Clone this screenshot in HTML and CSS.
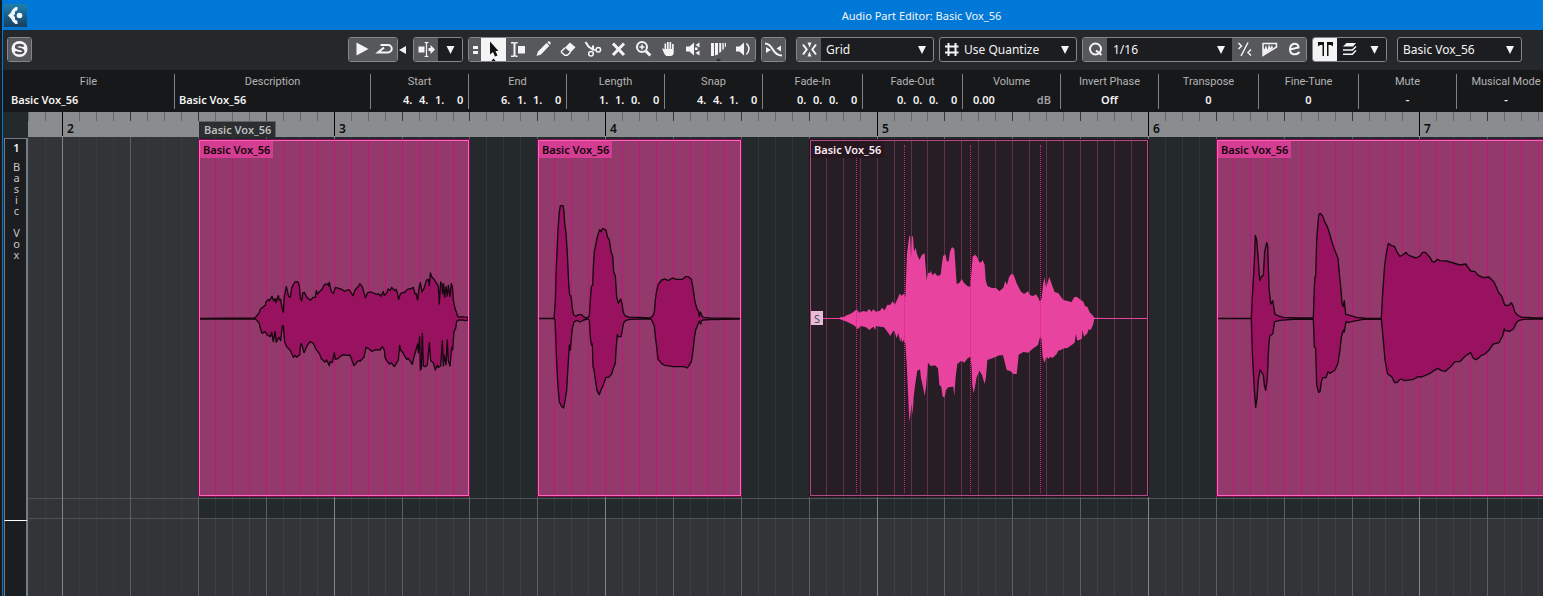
FILE: index.html
```html
<!DOCTYPE html>
<html lang="en">
<head>
<meta charset="utf-8">
<meta name="viewport" content="width=device-width, initial-scale=1">
<title>Audio Part Editor: Basic Vox_56</title>
<link rel="stylesheet" href="styles.css">
</head>
<body>
<div class="window">
  <header class="titlebar">
    <svg class="app-logo" viewBox="0 0 23 23" aria-hidden="true">
      <defs><linearGradient id="logo-bg" x1="0" y1="0" x2="0" y2="1"><stop offset="0" stop-color="#1f7fae"/><stop offset="1" stop-color="#163f60"/></linearGradient></defs>
      <rect width="23" height="23" fill="url(#logo-bg)"/>
      <path d="M11.500 3h2v3L11 7.500V10l-1.500 1.500L11 13v2.500l2.500 1.500v3h-2l-3-2.500L7 14.500l-3-3 3-3L8.500 5.500z" fill="#f4f7f9"/>
      <circle cx="15.500" cy="11.500" r="2.800" fill="#f4f7f9"/>
    </svg>
    <h1 class="title">Audio Part Editor: Basic Vox_56</h1>
  </header>

  <div class="toolbar" role="toolbar" aria-label="Editor tools">
    <div class="group">
      <button class="tool" aria-label="Solo editor"><svg class="icon" viewBox="0 0 25 25"><circle cx="12.500" cy="12" r="8" fill="#f6f6f6"/><path d="M16.300 9.600C15.500 7.500 9 7.300 9 10c0 2.500 7.300 1.300 7.300 4.200 0 2.800-7 2.500-7.700.2" fill="none" stroke="#515356" stroke-width="2.300"/></svg></button>
    </div>

    <div class="group group-transport">
      <button class="tool" aria-label="Play"><svg class="icon" viewBox="0 0 25 25"><path d="M7.500 5.500v13L19.500 12z"/></svg></button>
      <button class="tool" aria-label="Loop"><svg class="icon" viewBox="0 0 25 25"><path class="line" d="M7.500 8h7.500a3.700 3.700 0 0 1 0 7.500H5l6-5"/></svg></button>
    </div>
    <button class="expander" aria-label="Collapse transport"><svg class="icon-small" viewBox="0 0 7 8"><path d="M7 0v8L0 4z"/></svg></button>

    <div class="group">
      <button class="tool" aria-label="Auto-scroll"><svg class="icon" viewBox="0 0 25 25"><path d="M4.500 9.500h6v6h-6zM10 5h5l-1.900 1.500v12L15 20h-5l1.900-1.500v-12zM14.500 11h2V8l4.500 4.500-4.500 4.500v-3h-2z"/></svg></button>
      <button class="tool dark" aria-label="Auto-scroll settings"><svg class="icon" viewBox="0 0 25 25"><path d="M8.500 9h8l-4 8z"/></svg></button>
    </div>

    <div class="group">
      <button class="tool narrow" aria-label="Tool options"><svg class="icon-narrow" viewBox="0 0 13 25"><path d="M4 9h5v3H4zM4 14h5v3H4z"/></svg></button>
      <button class="tool active" aria-label="Object selection" aria-pressed="true"><svg class="icon" viewBox="0 0 25 25"><path fill="#111" d="M9 4.500v13l3-2.500 2 4.500 2.500-1-2-4.500h3zM9.500 25l3-3.500 3 3.500z"/></svg></button>
      <button class="tool" aria-label="Range selection"><svg class="icon" viewBox="0 0 25 25"><path d="M5 5h3l.8.800L9.600 5h2v1.500H9.500v12h2.100V20h-2l-.8-.8L8 20H5v-1.500h2.500v-12H5zM12 9h7v7.500h-7z"/></svg></button>
      <button class="tool" aria-label="Draw"><svg class="icon" viewBox="0 0 25 25"><path d="M5.500 19l1.500-4.500L15.500 6l2.800 2.700L10 17.500zM16.300 5.200l1-.9c1-.6 3 1.500 2.400 2.500l-.9.900z"/></svg></button>
      <button class="tool" aria-label="Erase"><svg class="icon" viewBox="0 0 25 25"><path d="M14 5.500l5.500 4.800-5 5.200L9 10.500z"/><path class="thin" d="M9 10.700L5.500 14.200v1.300l3.300 2.800h2.500l3.200-3"/></svg></button>
      <button class="tool" aria-label="Split"><svg class="icon" viewBox="0 0 25 25"><path class="line" d="M4.500 5l3 4.500 5 3.500M12 8.500v5"/><path class="thin" d="M12.500 13h3"/><circle class="thin" cx="10" cy="16.800" r="2.300"/><circle class="thin" cx="17.300" cy="12.800" r="2.300"/></svg></button>
      <button class="tool" aria-label="Mute"><svg class="icon" viewBox="0 0 25 25"><path class="heavy" d="M7 6.500l11 11.500M18 6.500L7 18"/></svg></button>
      <button class="tool" aria-label="Zoom"><svg class="icon" viewBox="0 0 25 25"><circle class="line" cx="11" cy="10" r="5"/><path class="thin" d="M8.500 10h5M11 7.500v5"/><path class="heavy" d="M14.800 14l4.500 4.500"/></svg></button>
      <button class="tool" aria-label="Hand"><svg class="icon" viewBox="0 0 25 25"><path d="M6.500 11l2 1.500V6.500h1.700V12h.8V5h1.700v7h.8V5h1.700v7h.8V7h1.700v8.500c0 2-1.200 3.500-3 3.500h-3.200c-2 0-3-1.500-5-6.500z"/></svg></button>
      <button class="tool" aria-label="Play tool"><svg class="icon" viewBox="0 0 25 25"><path d="M5 9.500h3.500l4.500-4v13l-4.500-4H5zM14.500 8l4-2.500v5zM14.500 16l4-2.500v5zM14 10.500h2.500v2.500H14z"/></svg></button>
      <button class="tool" aria-label="Time warp"><svg class="icon" viewBox="0 0 25 25"><path d="M5 6h3v13H5zM9 6h3v11.500l-3 1zM13.200 6h2v8.800l-2 1.200zM16.300 6h1.500v6l-1.500 1.200zM18.800 6h1.200v3.500l-1.200 1z"/><path fill="#202327" d="M9 25l3.500-3.500L16 25z"/></svg></button>
      <button class="tool" aria-label="Scrub"><svg class="icon" viewBox="0 0 25 25"><path d="M5 9.500h3.500l4.500-4v13l-4.500-4H5z"/><path class="thin" d="M15.300 6.500c3.500 2.500 3.500 8 0 11"/></svg></button>
    </div>

    <div class="group">
      <button class="tool" aria-label="Auto-crossfade"><svg class="icon" viewBox="0 0 25 25"><path class="line" d="M4 6.500c3.500 0 5.500 2 7.500 5.500s4.500 6.500 9.500 6.500"/><path d="M5 10l5 3-5 3zM20 8.500v6l-4.500-3z"/></svg></button>
    </div>

    <div class="group group-snap">
      <button class="tool" aria-label="Snap on/off"><svg class="icon" viewBox="0 0 25 25"><path class="line" d="M6 7.500l3.700 5L6 17.500M19 7.500l-3.700 5 3.700 5"/><path d="M12.500 10.500l-2-5h4zM12.500 14.500l-2 5h4z"/></svg></button>
      <div class="picker"><select class="select select-snap" aria-label="Snap type"><option>Grid</option><option>Events</option></select></div>
    </div>

    <div class="group group-gridtype">
      <svg class="hash" viewBox="0 0 25 25" aria-hidden="true"><path class="line" d="M9.500 6v13M16.500 6v13M6 9.500h13.500M6 15.500h13.500"/></svg>
      <div class="picker"><select class="select select-grid" aria-label="Grid type"><option>Use Quantize</option><option>Bar</option></select></div>
    </div>

    <div class="group">
      <button class="tool" aria-label="Apply quantize"><svg class="icon" viewBox="0 0 25 25"><circle class="line" cx="12.500" cy="12" r="5.500"/><path class="line" d="M13 13.500l5.500 4.500"/></svg></button>
      <div class="picker"><select class="select select-quantize" aria-label="Quantize preset"><option>1/16</option><option>1/8</option></select></div>
      <button class="tool" aria-label="Soft quantize"><svg class="icon" viewBox="0 0 25 25"><path class="thin" d="M16 5.500L9 19M6.500 6l3 3-3 3M19 12.500l-3 3 3 3"/></svg></button>
      <button class="tool" aria-label="Quantize audio"><svg class="icon" viewBox="0 0 25 25"><path class="thin" d="M6 6.500v12L19.500 10V6.500z"/><path d="M6 14V9.500l1.500 3L9 8l1.500 5L12 7l1.500 4L15 8l1 3-9.500 7z"/></svg></button>
      <button class="tool" aria-label="Open quantize panel"><svg class="icon" viewBox="0 0 25 25"><path class="line" d="M8 12.500l8.500-2c0-5.500-8-5-8.500 1.500-.3 6.500 6.500 6.500 9.500 3"/></svg></button>
    </div>

    <div class="group">
      <button class="tool active" aria-label="Show part borders" aria-pressed="true"><svg class="icon" viewBox="0 0 25 25"><path fill="#111" d="M5 5h6v14H9.500V8H7L5 9.500zM14 5h6v4.500L18 8h-2.500v11H14z"/></svg></button>
      <button class="tool dark" aria-label="Lanes"><svg class="icon" viewBox="0 0 25 25"><path d="M9.500 6H19l-3 3.500H6z"/><path class="thin" d="M15.500 13l3.500-3.500M15.500 17l3.500-3.500"/><path d="M6 12.300h10v1.500H6zM6 16.500h10V18H6z"/></svg></button>
      <button class="tool dark" aria-label="Part settings"><svg class="icon" viewBox="0 0 25 25"><path d="M8.500 9h8l-4 8z"/></svg></button>
    </div>

    <div class="group group-part">
      <div class="picker"><select class="select select-part" aria-label="Active part"><option>Basic Vox_56</option></select></div>
    </div>
  </div>

  <dl class="info">
    <div class="cell cell-file"><dt>File</dt><dd>Basic Vox_56</dd></div>
    <div class="cell cell-desc"><dt>Description</dt><dd>Basic Vox_56</dd></div>
    <div class="cell"><dt>Start</dt><dd class="time"><span>4.</span><span>4.</span><span>1.</span><span>0</span></dd></div>
    <div class="cell"><dt>End</dt><dd class="time"><span>6.</span><span>1.</span><span>1.</span><span>0</span></dd></div>
    <div class="cell"><dt>Length</dt><dd class="time"><span>1.</span><span>1.</span><span>0.</span><span>0</span></dd></div>
    <div class="cell"><dt>Snap</dt><dd class="time"><span>4.</span><span>4.</span><span>1.</span><span>0</span></dd></div>
    <div class="cell cell-wide"><dt>Fade-In</dt><dd class="time"><span>0.</span><span>0.</span><span>0.</span><span>0</span></dd></div>
    <div class="cell cell-wide"><dt>Fade-Out</dt><dd class="time"><span>0.</span><span>0.</span><span>0.</span><span>0</span></dd></div>
    <div class="cell"><dt>Volume</dt><dd class="volume"><span>0.00</span><span class="unit">dB</span></dd></div>
    <div class="cell"><dt>Invert Phase</dt><dd class="center">Off</dd></div>
    <div class="cell cell-wide"><dt>Transpose</dt><dd class="center">0</dd></div>
    <div class="cell cell-wide"><dt>Fine-Tune</dt><dd class="center">0</dd></div>
    <div class="cell"><dt>Mute</dt><dd class="center">-</dd></div>
    <div class="cell"><dt>Musical Mode</dt><dd class="center">-</dd></div>
  </dl>

  <main class="editor">
    <aside class="lanes">
      <div class="lanes-head"></div>
      <div class="lane">
        <b class="lane-number">1</b>
        <div class="lane-name" aria-label="Basic Vox"><span>B</span><span>a</span><span>s</span><span>i</span><span>c</span><span>&nbsp;</span><span>V</span><span>o</span><span>x</span></div>
      </div>
      <div class="lane-rest"></div>
    </aside>

    <section class="timeline">
      <div class="ruler">
        <svg class="ticks" data-kind="ruler" aria-hidden="true"></svg>
        <span class="bar-number" style="left:39px">2</span>
        <span class="bar-number" style="left:311px">3</span>
        <span class="bar-number" style="left:582px">4</span>
        <span class="bar-number" style="left:854px">5</span>
        <span class="bar-number" style="left:1125px">6</span>
        <span class="bar-number" style="left:1396px">7</span>
        <span class="part-tag" style="left:171px">Basic Vox_56</span>
      </div>
      <div class="arrange">
        <div class="part-area" style="left:170px"></div>
        <div class="lane-bottom"></div>
        <svg class="ticks" data-kind="grid" data-part-start="170" aria-hidden="true"></svg>

        <article class="clip" style="left:171px;width:270px" data-start="171">
          <svg class="ticks" data-kind="clip" aria-hidden="true"></svg>
          <svg class="wave" viewBox="30 63 804 1062" preserveAspectRatio="none" aria-hidden="true"><path d="M30 595L195 594 200 588 208 578 211 568 218 562 226 556 228 545 236 538 238 543 246 529 251 543 256 536 258 548 265 527 268 541 272 538 276 562 280 576 283 530 289 500 296 530 301 532 305 505 310 493 316 485 324 486 328 498 331 535 335 543 338 520 343 517 350 531 361 541 370 532 376 532 379 512 382 522 390 514 396 508 403 494 414 492 416 498 418 487 424 514 430 521 436 502 446 505 455 508 463 514 477 509 489 527 495 510 506 498 509 491 517 500 526 533 533 518 543 516 560 523 567 522 572 529 577 521 580 514 583 527 591 518 594 507 601 511 605 502 614 512 618 508 622 518 626 538 632 520 645 516 652 508 665 505 670 502 675 522 678 520 683 540 687 505 691 488 696 516 702 505 709 481 715 478 718 497 721 459 726 472 732 478 740 490 745 498 748 552 752 486 756 492 758 522 761 492 764 532 768 500 772 528 775 496 780 530 784 490 787 500 790 540 795 565 803 588 808 592 815 590 834 592V600L826 602 818 600 806 600 800 604 797 625 792 635 788 690 785 682 780 738 775 722 772 660 768 735 763 706 760 738 757 662 752 738 745 742 742 735 736 750 730 728 722 722 718 668 712 735 706 740 700 738 697 640 694 746 691 750 689 650 685 698 683 672 678 690 670 718 667 733 655 715 650 718 640 700 632 690 629 676 625 720 620 728 613 740 603 728 598 732 590 722 585 712 583 690 577 680 570 690 558 689 545 694 537 687 528 682 522 712 510 724 505 722 492 737 480 705 470 706 463 704 452 708 445 715 436 718 433 698 427 728 420 725 418 737 410 720 405 726 394 716 388 700 378 688 370 670 360 665 352 676 342 698 335 672 332 672 329 704 320 712 316 706 310 712 300 690 290 680 284 665 280 617 277 618 272 662 267 652 262 660 259 667 255 635 250 665 245 637 241 650 232 645 225 635 216 640 210 622 208 610 200 600 195 597H30z"/></svg>
          <span class="clip-name">Basic Vox_56</span>
        </article>

        <article class="clip" style="left:510px;width:203px" data-start="510">
          <svg class="ticks" data-kind="clip" aria-hidden="true"></svg>
          <svg class="wave" viewBox="27 63 603 1062" preserveAspectRatio="none" aria-hidden="true"><path d="M27 595H72L76 545 79 440 84 330 88 275 91 257H99L102 275 104 310 108 340 112 400 116 490 119 525 123 528 127 565 131 585 139 589 145 584H155L161 590 167 594 174 592 178 588 181 540 184 500 188 495 190 440 193 395 200 360 205 340 209 329 213 335 218 325 228 330 232 350 238 360 243 395 248 408 251 455 256 468 260 530 265 550 272 537 276 550 280 578 286 588 300 592 330 592 362 594 370 585 373 575 376 540 380 512 385 493 395 480 405 477 415 482 427 474 440 478 458 478 466 470 475 470 484 478 489 505 495 545 501 567 505 572 508 590 511 576 515 586 520 592 540 594 630 595V597L540 599 520 600 515 601 512 612 508 603 503 615 497 630 493 655 489 692 484 725 472 744 462 740 430 740 405 736 395 731 388 722 384 718 380 680 376 650 373 618 365 600 362 597 330 597 300 598 288 601 281 608 277 630 273 650 265 650 262 644 258 690 256 730 250 745 245 762 236 772 228 772 222 788 218 800 212 812 208 824 201 812 197 785 192 750 189 740 187 672 184 675 181 650 178 600 172 597 161 600 150 606 140 601 132 606 127 625 124 655 121 690 118 675 114 740 110 810 107 830 101 864 94 858 88 845 84 800 80 730 78 670 75 600 72 596H27z"/></svg>
          <span class="clip-name">Basic Vox_56</span>
        </article>

        <article class="clip selected" style="left:782px;width:338px" data-start="782">
          <svg class="ticks" data-kind="clip" aria-hidden="true"></svg>
          <svg class="wave" viewBox="33 33 1008 1062" preserveAspectRatio="none" aria-hidden="true"><path d="M33 564H120L122 560 130 562 140 556 150 552 160 546 170 538 178 548 190 543 200 545 207 537 215 545 220 538 228 545 240 542 246 533 254 541 262 524 270 525 278 514 284 524 292 508 299 491 305 497 310 491 316 500 321 370 328 318 331 318 333 385 336 318 339 320 342 365 347 353 351 372 358 390 366 374 374 370 376 400 380 450 384 428 390 430 392 422 398 436 405 428 412 438 422 434 426 400 429 378 436 373 441 395 446 393 450 365 456 351 463 356 466 400 470 462 478 459 485 447 492 459 503 469 511 470 514 430 518 380 525 374 531 380 537 395 542 398 548 390 554 405 557 450 562 468 575 474 588 474 598 484 610 473 616 453 621 465 627 442 634 431 641 435 650 460 662 484 672 492 684 484 690 496 700 498 708 493 715 503 720 515 725 505 729 465 733 442 738 472 748 441 756 465 764 486 775 490 790 510 815 516 822 502 830 500 843 510 850 515 855 528 862 530 870 548 877 555 883 563 920 564H1041V567H883L879 585 872 600 866 598 862 610 852 620 847 600 846 626 832 632 828 612 824 638 815 645 802 654 792 655 782 660 775 662 770 672 757 685 753 680 745 686 740 680 733 698 728 680 724 625 720 622 714 645 700 655 685 668 670 666 656 674 653 705 650 732 640 732 632 724 620 720 615 700 609 676 598 676 585 682 562 690 558 740 554 762 546 735 538 722 530 742 524 775 521 790 517 765 514 700 511 680 503 685 493 698 484 692 472 702 467 740 463 798 460 770 445 772 438 780 434 802 428 800 424 770 418 765 414 715 405 706 392 708 384 698 378 770 374 798 369 770 363 745 360 718 352 722 346 760 341 800 338 855 335 820 331 855 328 876 324 790 320 700 316 640 310 630 306 638 304 622 301 636 295 610 290 625 283 602 278 605 271 618 262 605 252 592 240 590 228 588 226 600 220 590 208 600 198 592 182 588 173 598 165 588 150 580 135 573 120 568V567H33z"/></svg>
          <i class="hitpoint" style="left:45px"></i><i class="hitpoint" style="left:93px"></i><i class="hitpoint" style="left:159px"></i><i class="hitpoint" style="left:229px"></i>
          <span class="clip-name">Basic Vox_56</span>
          <span class="snap-flag">S</span>
        </article>

        <article class="clip" style="left:1189px;width:400px" data-start="1189">
          <svg class="ticks" data-kind="clip" aria-hidden="true"></svg>
          <svg class="wave" viewBox="54 33 1194 1062" preserveAspectRatio="none" aria-hidden="true"><path d="M54 565H154L157 500 161 430 164 375 166 316 170 330 175 390 179 452 184 440 190 436 194 365 200 338 203 345 206 440 207 475 212 522 218 512 222 535 225 553 236 558 250 562 290 564H340L343 470 345 440 347 440 350 330 356 255 361 250 368 258 374 275 382 290 390 315 397 340 405 362 414 385 418 430 423 480 426 520 430 530 433 512 437 553 450 556 470 562 500 565H544L548 490 554 405 560 365 565 340 573 346 584 350 592 368 600 379 608 375 618 367 626 376 648 384 660 378 668 367 676 367 690 382 696 394 704 396 712 388 720 392 740 393 760 399 780 405 797 402 812 423 825 425 835 436 850 443 867 441 882 456 897 490 905 498 914 525 925 527 934 518 940 530 944 545 952 555 965 562 985 562 1000 564 1248 564V567L1000 567 970 568 958 571 950 577 940 597 928 604 915 602 913 596 908 618 897 638 880 642 867 660 855 672 845 676 829 689 820 685 812 668 796 678 780 695 765 695 750 712 736 724 725 722 712 715 690 730 665 741 655 740 640 748 615 752 602 747 590 758 584 758 575 740 563 732 555 690 549 620 544 568 500 567 485 569 455 575 445 578 438 575 433 606 430 600 424 622 420 660 414 700 405 720 390 730 384 725 378 743 368 743 364 755 360 785 356 787 350 765 347 655 343 650 340 568 290 567 240 571 224 575 218 612 209 618 206 650 202 745 197 781 193 765 190 735 180 720 175 750 171 805 167 832 163 780 158 690 155 600 154 566H54z"/></svg>
          <span class="clip-name">Basic Vox_56</span>
        </article>
      </div>
    </section>
  </main>
</div>
<script src="grid.js"></script>
</body>
</html>
```
FILE: styles.css
```css
* { box-sizing: border-box; }

body {
  margin: 0;
  background: #24292b;
  color: #f4f4f4;
  font-family: "Noto Sans", "Open Sans", sans-serif;
  font-size: 11px;
}

button, select { font: inherit; color: inherit; margin: 0; padding: 0; border: 0; background: none; }

.window {
  display: flex;
  flex-direction: column;
  min-height: 100vh;
  overflow: hidden;
  padding-left: 3px;
  background: linear-gradient(to right, #17191b 2px, #0078d7 2px, #0078d7 3px, #24292b 3px);
}

/* Title bar */
.titlebar {
  display: grid;
  grid-template-columns: 24px 1fr 24px;
  align-items: center;
  height: 30px;
  margin-left: -1px;
  padding-left: 2px;
  background: #0078d7;
}
.app-logo { width: 23px; height: 23px; }
.title { margin: 0; padding-left: 296px; font-size: 11px; font-weight: 400; text-align: center; }

/* Toolbar */
.toolbar {
  display: flex;
  align-items: center;
  gap: 5px;
  height: 40px;
  padding: 0 21px 1px 4px;
  background: #24282b;
}
.group {
  display: flex;
  flex: none;
  height: 25px;
  border: 1px solid #85878a;
  border-radius: 3px;
  overflow: hidden;
  background: #1b1d20;
}
.group-transport { margin-left: auto; }
.group-snap, .group-part { margin-left: 5px; }
.tool { display: flex; flex: none; width: 25px; height: 23px; align-items: center; justify-content: center; background: #56585b; }
.tool:first-child, .tool:last-child { width: 24px; }
.tool:only-child { width: 23px; }
.tool.narrow { width: 12px; }
.tool.dark { background: #1b1d20; }
.tool.active { background: #f4f4f4; }
.icon, .hash { flex: none; width: 25px; height: 25px; fill: #f4f4f4; }
.icon-narrow { flex: none; width: 13px; height: 25px; fill: #f4f4f4; }
.icon-small { width: 7px; height: 8px; fill: #f4f4f4; }
.line, .thin, .heavy { fill: none; stroke: #f4f4f4; stroke-width: 2; }
.thin { stroke-width: 1.5; }
.heavy { stroke-width: 3; }
.expander { display: flex; align-items: center; height: 25px; margin: 0 2px 0 -4px; }

.hash { margin: -1px; }
.picker { position: relative; display: flex; }
.picker::after {
  content: "";
  position: absolute;
  top: 8px;
  right: 7px;
  width: 8px;
  height: 8px;
  background: #f4f4f4;
  clip-path: polygon(0 0, 100% 0, 50% 100%);
  pointer-events: none;
}
.select { height: 23px; padding-left: 5px; appearance: none; font-size: 12px; outline: none; }
.select option { background: #1b1d20; }
.select-snap { width: 112px; }
.select-grid { width: 113px; padding-left: 1px; }
.select-quantize { width: 125px; padding-left: 6px; }
.select-part { width: 123px; }

/* Info line */
.info {
  display: flex;
  height: 42px;
  margin: 0;
  padding: 4px 0 3px;
  overflow: hidden;
  background: #17181a;
}
.cell { flex: none; width: 98px; border-right: 1px solid #808285; }
.cell-wide { width: 100px; }
.cell-file { width: 172px; }
.cell-desc { width: 196px; }
.cell:last-child { border-right: 0; }
.cell dt { height: 15px; color: #b4b4b4; font-family: Roboto, "Noto Sans", sans-serif; line-height: 15px; text-align: center; }
.cell dd { height: 16px; margin: 3px 0 0 4px; font-weight: 600; line-height: 15px; }
.cell-file dd { margin-left: 8px; }
.cell .center { margin-left: 0; text-align: center; }
.cell .time { display: grid; grid-template-columns: 16px 16px 22px 6px; justify-content: end; margin-right: 5px; }
.cell .volume { display: flex; justify-content: space-between; margin: 3px 9px 0 10px; }
.unit { color: #a0a2a4; }

/* Lane list */
.editor { display: flex; flex: 1; }
.lanes { display: flex; flex: none; flex-direction: column; width: 25px; padding-left: 1px; }
.lanes-head { height: 26px; }
.lane {
  height: 383px;
  padding: 1px 0 0 2px;
  border: solid #6e7c88;
  border-width: 1px 2px 0 1px;
  border-bottom: 1px solid #fff;
  background: #1b1d21;
  text-align: center;
}
.lane-rest { flex: 1; border: solid #6e7c88; border-width: 0 2px 0 1px; background: #1b1d21; }
.lane-number { display: block; height: 21px; line-height: 16px; font-weight: 600; }
.lane-name { display: flex; flex-direction: column; color: #c8c8c8; line-height: 11px; }

/* Timeline */
.timeline { display: flex; flex: 1; flex-direction: column; min-width: 0; overflow: hidden; }
.ruler { position: relative; height: 25px; background: #8b8c90; }
.ticks { position: absolute; top: 0; left: 0; width: 100%; height: 100%; }
.bar-number { position: absolute; bottom: 1px; color: #0c0c0c; font-size: 12px; font-weight: 600; line-height: 15px; }
.part-tag {
  position: absolute;
  bottom: 0;
  padding: 0 4px 0 5px;
  border: solid #606366;
  border-width: 1px 1px 0 0;
  background: #2c2f31;
  color: #bdbdbd;
  font-weight: 600;
  line-height: 15px;
}
.arrange { position: relative; flex: 1; overflow: hidden; background: #333437; }
.part-area { position: absolute; top: 0; right: 0; height: 381px; background: #24292b; }
.lane-bottom { position: absolute; top: 361px; left: 1px; right: 0; height: 21px; border: solid #505356; border-width: 1px 0; }

.tick-sixteenth { fill: #67686c; }
.tick-beat { fill: #36373a; }
.tick-bar { fill: #050505; }
.grid-sixteenth { fill: #fff; opacity: .06; }
.grid-sixteenth.outside { opacity: .03; }
.grid-beat { fill: #5b6062; }
.grid-bar { fill: #828588; }
.clip-line { fill: #bd1879; }

/* Clips */
.clip {
  position: absolute;
  top: 3px;
  height: 356px;
  border: 1px solid #ff63bb;
  background: #93396b;
  box-shadow: 0 0 0 1px #7a0d4e;
}
.wave { position: absolute; inset: 0; width: 100%; height: 100%; fill: #99125f; stroke: #16060f; stroke-width: 4; stroke-linejoin: round; }
.clip-name { position: absolute; top: 0; left: 0; padding: 0 3px; background: #d43d92; color: #0d0509; font-weight: 600; line-height: 17px; }
.selected { border-color: #b04a86; background: #271d24; box-shadow: 0 0 0 1px #2b0e20; }
.selected .clip-line { fill: #60304c; }
.selected .wave { fill: #e8439f; stroke: none; }
.selected .clip-name { background: #26161f; color: #fbeaf3; }
.hitpoint { position: absolute; top: 4px; bottom: 2px; border-left: 1px dotted #e8178c; }
.snap-flag { position: absolute; top: 170px; left: 0; width: 12px; height: 14px; background: #e6bcd6; color: #4c4c4c; line-height: 15px; text-align: center; }
```
FILE: grid.js
```js
(function () {
  const ORIGIN = 34.4;
  const STEP = 271.4 / 16;
  const NS = 'http://www.w3.org/2000/svg';

  function draw(svg) {
    const kind = svg.dataset.kind;
    const clip = svg.closest('.clip');
    const start = clip ? Number(clip.dataset.start) + 1 : 0;
    const partStart = Number(svg.dataset.partStart || 0);
    const width = svg.getBoundingClientRect().width;
    svg.replaceChildren();
    for (let k = -2; ; k++) {
      const x = Math.round(ORIGIN + k * STEP) - start;
      if (x >= width) break;
      if (x < 0) continue;
      const level = k % 16 === 0 ? 'bar' : k % 4 === 0 ? 'beat' : 'sixteenth';
      const line = document.createElementNS(NS, 'rect');
      line.setAttribute('x', x);
      line.setAttribute('width', 1);
      line.setAttribute('height', kind === 'ruler' ? (level === 'bar' ? 24 : 9) : '100%');
      line.setAttribute('class', kind === 'ruler' ? 'tick-' + level : kind === 'grid' ? 'grid-' + level : 'clip-line');
      if (x < partStart) line.classList.add('outside');
      svg.append(line);
    }
  }

  function drawAll() {
    document.querySelectorAll('.ticks').forEach(draw);
  }

  window.addEventListener('resize', drawAll);
  drawAll();
})();
```
